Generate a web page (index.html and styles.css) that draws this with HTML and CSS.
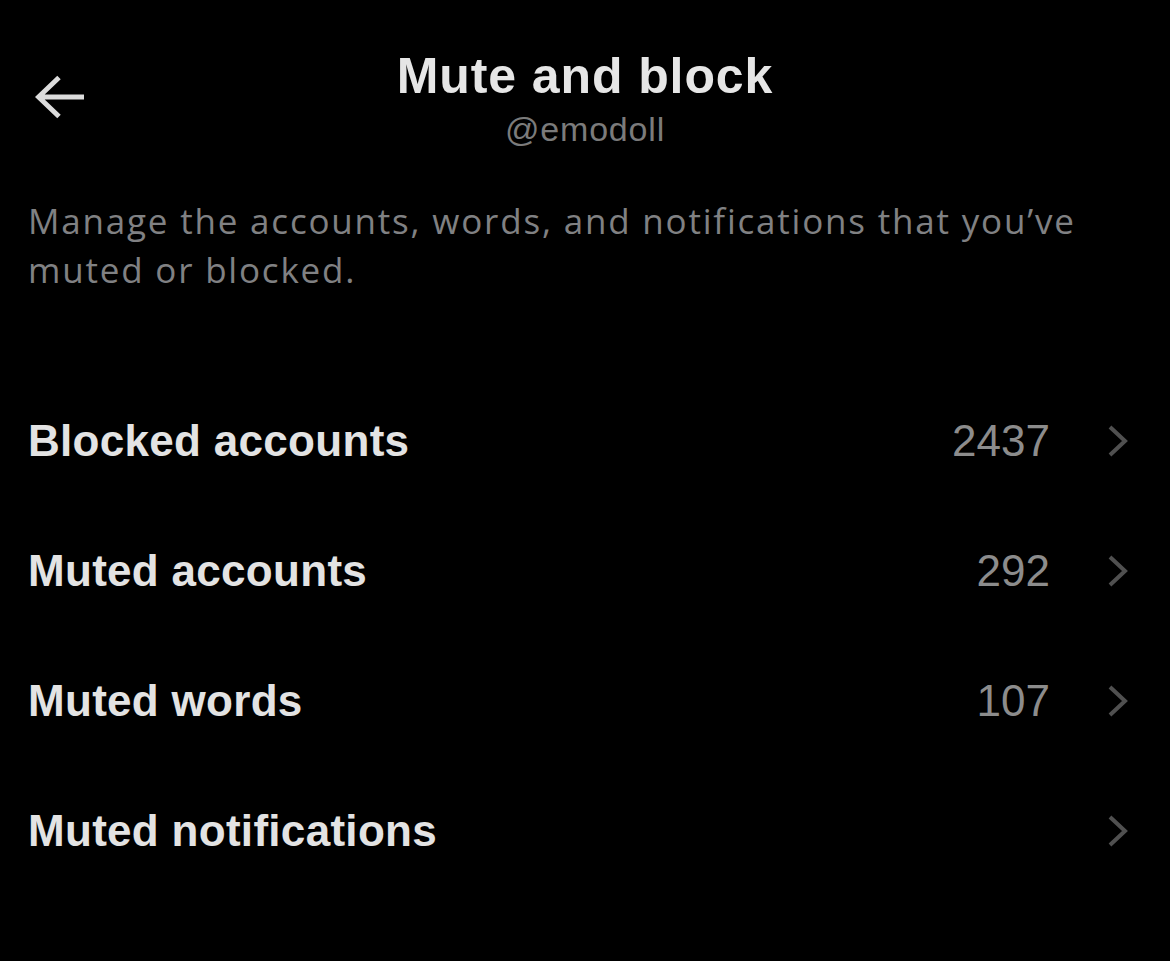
FILE: index.html
```html
<!DOCTYPE html>
<html lang="en">
<head>
<meta charset="utf-8">
<title>Mute and block</title>
<link rel="stylesheet" href="styles.css">
</head>
<body>
<div class="screen">
  <header class="header">
    <div class="back">
      <svg class="back-icon" viewBox="0 0 50 44" width="50" height="44" aria-hidden="true">
        <path d="M24 2.5 L3.5 22 L24 41.5 M3.5 22 H49" fill="none" stroke="#dcdcdc" stroke-width="5" stroke-linecap="butt" stroke-linejoin="miter"/>
      </svg>
    </div>
    <div class="titles">
      <h1 class="title">Mute and block</h1>
      <div class="handle">@emodoll</div>
    </div>
    <div class="spacer"></div>
  </header>

  <p class="desc">Manage the accounts, words, and notifications that you’ve muted or blocked.</p>

  <ul class="list">
    <li class="row">
      <span class="label">Blocked accounts</span>
      <span class="count">2437</span>
      <svg class="chev" viewBox="0 0 20 32" width="20" height="32" aria-hidden="true"><path d="M2 2 L17 16 L2 30" fill="none" stroke="#505050" stroke-width="4"/></svg>
    </li>
    <li class="row">
      <span class="label">Muted accounts</span>
      <span class="count">292</span>
      <svg class="chev" viewBox="0 0 20 32" width="20" height="32" aria-hidden="true"><path d="M2 2 L17 16 L2 30" fill="none" stroke="#505050" stroke-width="4"/></svg>
    </li>
    <li class="row">
      <span class="label">Muted words</span>
      <span class="count">107</span>
      <svg class="chev" viewBox="0 0 20 32" width="20" height="32" aria-hidden="true"><path d="M2 2 L17 16 L2 30" fill="none" stroke="#505050" stroke-width="4"/></svg>
    </li>
    <li class="row">
      <span class="label">Muted notifications</span>
      <span class="count"></span>
      <svg class="chev" viewBox="0 0 20 32" width="20" height="32" aria-hidden="true"><path d="M2 2 L17 16 L2 30" fill="none" stroke="#505050" stroke-width="4"/></svg>
    </li>
  </ul>
</div>
</body>
</html>
```

FILE: styles.css
```css
html, body {
  margin: 0;
  padding: 0;
  background: #000;
}
body {
  font-family: "Liberation Sans", Arial, sans-serif;
  color: #e3e3e3;
}
.screen {
  width: 1170px;
  height: 961px;
  overflow: hidden;
  background: #000;
}
.header {
  display: grid;
  grid-template-columns: 1fr auto 1fr;
  align-items: start;
  padding: 48px 0 0 0;
}
.back {
  padding: 27px 0 0 35px;
}
.back-icon {
  display: block;
}
.titles {
  text-align: center;
}
.title {
  margin: 0;
  font-size: 50px;
  font-weight: 700;
  letter-spacing: 0.9px;
  line-height: 56px;
  color: #e6e6e6;
}
.handle {
  margin-top: 5px;
  font-size: 34px;
  line-height: 40px;
  letter-spacing: 0.8px;
  color: #7b7b7b;
}
.desc {
  margin: 47px 0 0 0;
  padding: 0 70px 0 28px;
  font-family: "Open Sans", "Noto Sans", sans-serif;
  font-size: 35px;
  letter-spacing: 1.8px;
  line-height: 49px;
  color: #808183;
}
.list {
  list-style: none;
  margin: 82px 0 0 0;
  padding: 0;
}
.row {
  display: flex;
  align-items: center;
  height: 130px;
  padding: 0 42px 0 28px;
}
.label {
  flex: 1;
  font-size: 44px;
  font-weight: 700;
  letter-spacing: 0.3px;
  color: #e3e3e3;
}
.count {
  font-size: 44px;
  color: #8c8c8c;
  margin-right: 58px;
}
.chev {
  display: block;
}
```
